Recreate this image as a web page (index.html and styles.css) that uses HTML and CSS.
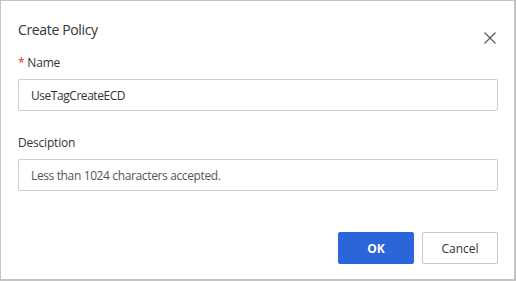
FILE: index.html
```html
<!DOCTYPE html>
<html>
<head>
<meta charset="utf-8">
<link rel="stylesheet" href="styles.css">
</head>
<body>
<div class="dialog">
  <div class="header">
    <div class="title">Create Policy</div>
    <button class="close" aria-label="Close">
      <svg width="12" height="12" viewBox="0 0 12 12"><path d="M0.5 0.5L11.5 11.5M11.5 0.5L0.5 11.5" stroke="#555" stroke-width="1.1" fill="none"/></svg>
    </button>
  </div>
  <div class="body">
    <div class="field">
      <label class="label"><span class="req">*</span> Name</label>
      <div class="input">UseTagCreateECD</div>
    </div>
    <div class="field">
      <label class="label">Desciption</label>
      <div class="input placeholder">Less than 1024 characters accepted.</div>
    </div>
  </div>
  <div class="footer">
    <button class="btn primary">OK</button>
    <button class="btn">Cancel</button>
  </div>
</div>
</body>
</html>
```
FILE: styles.css
```css
html, body {
  margin: 0;
  padding: 0;
}
body {
  background: #c4c4c4;
  width: 516px;
  height: 281px;
  padding: 1px 2px 2px 1px;
  box-sizing: border-box;
  font-family: "Open Sans", "Noto Sans", sans-serif;
}
.dialog {
  background: #fff;
  height: 278px;
  box-sizing: border-box;
  padding: 0 16px 0 17px;
  display: flex;
  flex-direction: column;
}
.header {
  display: flex;
  justify-content: space-between;
  align-items: flex-start;
  height: 53px;
}
.title {
  font-size: 14px;
  letter-spacing: -0.35px;
  color: #333;
  margin-top: 19px;
  line-height: 20px;
}
.close {
  border: 0;
  background: none;
  padding: 0;
  margin-top: 31px;
  margin-right: 2px;
  width: 12px;
  height: 12px;
  display: flex;
}
.field {
  display: flex;
  flex-direction: column;
}
.field + .field {
  margin-top: 23px;
}
.label {
  font-size: 12px;
  letter-spacing: -0.2px;
  color: #333;
  line-height: 18px;
  margin-bottom: 7px;
}
.req {
  color: #e0301e;
}
.input {
  height: 32px;
  box-sizing: border-box;
  border: 1px solid #cfcfcf;
  border-radius: 2px;
  padding: 0 12px;
  font-size: 12px;
  letter-spacing: -0.45px;
  color: #333;
  display: flex;
  align-items: center;
}
.placeholder {
  color: #555;
  letter-spacing: -0.37px;
}
.footer {
  margin-top: auto;
  margin-bottom: 15px;
  display: flex;
  justify-content: flex-end;
  gap: 8px;
}
.btn {
  width: 76px;
  height: 32px;
  border: 1px solid #c8c8c8;
  border-radius: 2px;
  background: #fff;
  font-family: "Open Sans", "Noto Sans", sans-serif;
  font-size: 12px;
  color: #333;
  padding: 0;
}
.btn.primary {
  background: #2b65d8;
  border-color: #2b65d8;
  color: #fff;
  font-weight: bold;
}
```
